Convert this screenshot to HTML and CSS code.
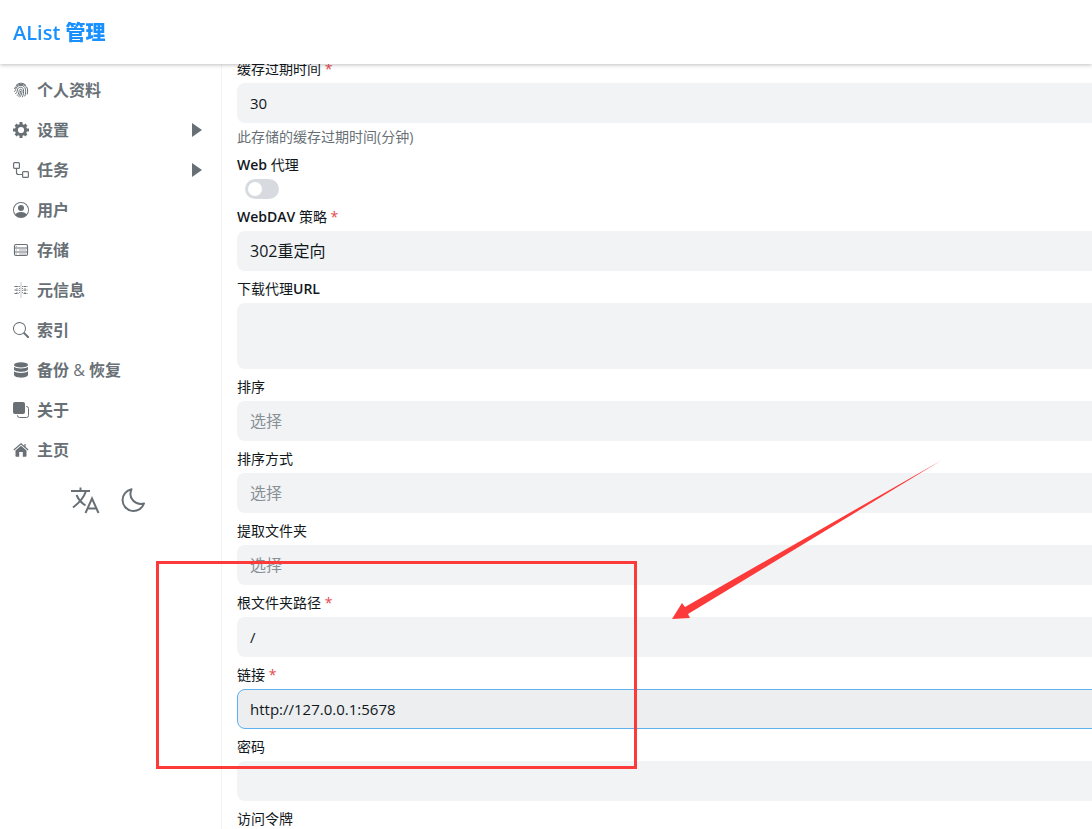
FILE: index.html
```html
<!DOCTYPE html>
<html lang="zh-CN">
<head>
    <meta charset="UTF-8">
    <meta name="viewport" content="width=device-width, initial-scale=1.0">
    <title>AList 管理</title>
    <link rel="stylesheet" href="styles.css">
</head>
<body>
    <header class="header">
        <a class="brand" href="#">AList <b>管理</b></a>
    </header>
    <div class="layout">
        <aside class="sidebar">
            <nav class="menu">
                <a class="menu-item" href="#">
                    <svg class="icon line" viewBox="0 0 16 16"><path d="M3 3.5a6.500 6.500 0 0 1 10 0M1.500 7C3 .8 13 .8 14.500 7c.3 2 .1 4-.4 5.500M1.300 9.800C3 8.500 2.400 6.500 4 5c2-2.200 6-2.200 7.800.4 1.300 2.300 1 6.300-.1 9M2.300 12c2.300-1.500 1.700-4 2.600-5.400 1.300-2 4.600-1.800 5.400.5.7 2.500.1 5.900-1 8.200M4 13.700C6 12 5.800 10 6.300 8.300c.5-1.500 2.500-1.400 2.700.2.200 2.500-.8 4.900-2.300 6.700M7.600 8.800c.1 2-.7 4-2.200 5.700"/></svg>
                    <span>个人资料</span>
                </a>
                <a class="menu-item" href="#">
                    <svg class="icon line" viewBox="0 0 16 16"><circle cx="8" cy="8" r="4.600" stroke-width="3"/><path d="M8 0v3M8 13v3M0 8h3M13 8h3M2.600 2.600l2 2M11.400 11.400l2 2M2.600 13.400l2-2M11.400 4.600l2-2" stroke-width="3"/></svg>
                    <span>设置</span>
                    <svg class="caret" viewBox="0 0 10 14"><path d="M0 0l10 7-10 7z"/></svg>
                </a>
                <a class="menu-item" href="#">
                    <svg class="icon line" viewBox="0 0 16 16"><g stroke-width="1.200"><rect x=".6" y=".6" width="5.800" height="5.800" rx="1"/><rect x="9.600" y="9.600" width="5.800" height="5.800" rx="1"/><path d="M3.500 6.400v4.100a2 2 0 0 0 2 2h4.100"/></g></svg>
                    <span>任务</span>
                    <svg class="caret" viewBox="0 0 10 14"><path d="M0 0l10 7-10 7z"/></svg>
                </a>
                <a class="menu-item" href="#">
                    <svg class="icon" viewBox="0 0 16 16"><path d="M11 6a3 3 0 1 1-6 0 3 3 0 0 1 6 0"/><path fill-rule="evenodd" d="M0 8a8 8 0 1 1 16 0A8 8 0 0 1 0 8m8-7a7 7 0 0 0-5.468 11.370C3.242 11.226 4.805 10 8 10s4.757 1.225 5.468 2.370A7 7 0 0 0 8 1"/></svg>
                    <span>用户</span>
                </a>
                <a class="menu-item" href="#">
                    <svg class="icon line" viewBox="0 0 16 16"><rect x="1.500" y="2.500" width="13" height="11" rx="1.500" stroke-width="1.200"/><path d="M1.500 6h13M1.500 10h13"/><path d="M3 8h1M6 8h7M3 4.500h1M3 12h1M6 12h7" stroke-width=".6"/></svg>
                    <span>存储</span>
                </a>
                <a class="menu-item" href="#">
                    <svg class="icon line" viewBox="0 0 16 16"><path d="M8 .5v15" stroke-width=".8" stroke-dasharray="1 1"/><path d="M1.500 4.500h4M10.500 4.500h4M1.500 8h4M10.500 8h4M1.500 11.500h4M10.500 11.500h4" stroke-dasharray="2.500 .5 1 3"/><path d="M6.500 4v8M9.500 4v8M4 4v8M12 4v8" stroke-width=".8" stroke-dasharray="1 1"/></svg>
                    <span>元信息</span>
                </a>
                <a class="menu-item" href="#">
                    <svg class="icon" viewBox="0 0 16 16"><path d="M11.742 10.344a6.500 6.500 0 1 0-1.397 1.398h-.001c.03.04.062.078.098.115l3.850 3.850a1 1 0 0 0 1.415-1.414l-3.850-3.850a1 1 0 0 0-.115-.1zM12 6.500a5.500 5.500 0 1 1-11 0 5.500 5.500 0 0 1 11 0"/></svg>
                    <span>索引</span>
                </a>
                <a class="menu-item" href="#">
                    <svg class="icon" viewBox="0 0 16 16"><ellipse cx="8" cy="2.900" rx="7" ry="2.700"/><path d="M1 4.800c2 2.300 12 2.300 14 0v2.700c-1 3-13 3-14 0zM1 9.300c2 2.300 12 2.300 14 0v3.700c-1 3.500-13 3.500-14 0z"/></svg>
                    <span>备份 <i>&amp;</i> 恢复</span>
                </a>
                <a class="menu-item" href="#">
                    <svg class="icon" viewBox="0 0 16 16"><rect width="12" height="12" rx="2"/><path d="M13 4.500h.5a2 2 0 0 1 2 2v7a2 2 0 0 1-2 2h-7a2 2 0 0 1-2-2V13" fill="none" stroke="currentColor"/></svg>
                    <span>关于</span>
                </a>
                <a class="menu-item" href="#">
                    <svg class="icon" viewBox="0 0 16 16"><path d="M8 3.800l5.500 4.700V14a.7.7 0 0 1-.7.7H9.800V10H6.200v4.700h-3a.7.7 0 0 1-.7-.7V8.500z"/><path d="M.8 8L8 1.800 15.200 8M12 2v2.800" fill="none" stroke="currentColor" stroke-width="1.200"/></svg>
                    <span>主页</span>
                </a>
            </nav>
            <div class="tools">
                <button class="tool" type="button" aria-label="语言">
                    <svg class="line" viewBox="0 0 32 32"><path d="M2 7h19M11.500 3.500V7M17 7C15 13.500 10 19 4 23.500M7.500 11c2 4.500 5 8 9 10.500M16.500 29L23 14.500 29.500 29M18.500 24.500h9" stroke-width="2"/></svg>
                </button>
                <button class="tool" type="button" aria-label="深色模式">
                    <svg class="line" viewBox="0 0 32 32"><path d="M14.500 5.200A11 11 0 1 0 27 19.500C19 21.500 10.500 15 14.500 5.200z" stroke-width="2" stroke-linejoin="round"/></svg>
                </button>
            </div>
        </aside>
        <main class="content">
            <form class="form">
                <div class="field">
                    <label for="cache">缓存过期时间 <em>*</em></label>
                    <input class="control" id="cache" type="text" value="30">
                    <p class="help">此存储的缓存过期时间(分钟)</p>
                </div>
                <div class="field">
                    <label for="web-proxy"><b>Web</b> 代理</label>
                    <input class="switch" id="web-proxy" type="checkbox" role="switch">
                </div>
                <div class="field">
                    <label for="webdav"><b>WebDAV</b> 策略 <em>*</em></label>
                    <select class="control" id="webdav"><option>302重定向</option></select>
                </div>
                <div class="field">
                    <label for="proxy-url">下载代理<b>URL</b></label>
                    <textarea class="control area" id="proxy-url"></textarea>
                </div>
                <div class="field">
                    <label for="order">排序</label>
                    <select class="control empty" id="order"><option>选择</option></select>
                </div>
                <div class="field">
                    <label for="direction">排序方式</label>
                    <select class="control empty" id="direction"><option>选择</option></select>
                </div>
                <div class="field">
                    <label for="extract">提取文件夹</label>
                    <select class="control empty" id="extract"><option>选择</option></select>
                </div>
                <div class="field">
                    <label for="root">根文件夹路径 <em>*</em></label>
                    <input class="control" id="root" type="text" value="/">
                </div>
                <div class="field">
                    <label for="url">链接 <em>*</em></label>
                    <input class="control active" id="url" type="text" value="http://127.0.0.1:5678">
                </div>
                <div class="field">
                    <label for="password">密码</label>
                    <input class="control" id="password" type="text">
                </div>
                <div class="field">
                    <label for="token">访问令牌</label>
                    <input class="control" id="token" type="text">
                </div>
            </form>
        </main>
    </div>
    <div class="mark-box"></div>
    <svg class="mark-arrow" viewBox="0 0 272 162"><path d="M0 160L10 144l3 4L270 1 16 155l2 4z"/></svg>
</body>
</html>
```
FILE: styles.css
```css
* {
    box-sizing: border-box;
}

body {
    margin: 0;
    background: #fff;
    color: #11181c;
    font-family: "Open Sans", "Noto Sans", "Noto Sans CJK SC", sans-serif;
    font-size: 16px;
}

.header {
    position: fixed;
    top: 0;
    left: 0;
    right: 0;
    z-index: 2;
    display: flex;
    align-items: center;
    height: 64px;
    padding: 2px 13px 0;
    background: #fff;
    box-shadow: 0 1px 4px rgba(0, 0, 0, 0.25);
}

.brand {
    color: #1890ff;
    font-size: 20px;
    line-height: 28px;
    font-weight: 600;
    text-decoration: none;
}

.layout {
    display: flex;
    height: 100vh;
}

.sidebar {
    flex: none;
    width: 222px;
    padding-top: 70px;
    border-right: 1px solid #f3f3f3;
}

.menu-item {
    display: flex;
    align-items: center;
    gap: 8px;
    height: 40px;
    padding: 0 19px 0 13px;
    color: #687076;
    font-weight: 700;
    line-height: 24px;
    text-decoration: none;
}

.menu-item i {
    font-style: normal;
    font-weight: 400;
}

.icon {
    flex: none;
    width: 16px;
    height: 16px;
    fill: currentColor;
}

.line {
    fill: none;
    stroke: currentColor;
}

.caret {
    width: 10px;
    height: 14px;
    margin-left: auto;
    fill: currentColor;
}

.tools {
    display: flex;
    justify-content: center;
    gap: 16px;
    padding: 14px 4px 0 0;
}

.tool {
    width: 32px;
    height: 32px;
    padding: 0;
    border: 0;
    background: none;
    color: #687076;
}

.tool svg {
    display: block;
}

.content {
    flex: 1;
    min-width: 0;
    padding: 59px 0 0 15px;
    overflow: hidden;
}

/* fields run past the right edge of the window */
.form {
    display: flex;
    flex-direction: column;
    gap: 8px;
    margin-right: -16px;
}

.field {
    display: flex;
    flex-direction: column;
    gap: 4px;
}

.field label {
    font-size: 14px;
    line-height: 20px;
}

.field b {
    font-weight: 600;
}

.field em {
    color: #e5484d;
    font-style: normal;
}

.control {
    width: 100%;
    height: 40px;
    padding: 0 12px;
    border: 1px solid transparent;
    border-radius: 8px;
    outline: 0;
    background: #f1f3f5;
    color: #11181c;
    font-family: inherit;
    font-size: 16px;
    appearance: none;
}

input.control {
    font-size: 15px;
}

.area {
    height: 66px;
    resize: none;
}

.empty {
    color: #889096;
}

.active {
    border-color: #5eb0ef;
    background: #eceef0;
}

.help {
    margin: 0;
    color: #687076;
    font-size: 14px;
    line-height: 20px;
}

.switch {
    width: 34px;
    height: 20px;
    margin: 0 8px;
    padding: 3px;
    border-radius: 10px;
    background: #d7dbdf;
    appearance: none;
}

.switch::before {
    content: "";
    display: block;
    width: 14px;
    height: 14px;
    border-radius: 50%;
    background: #fff;
}

.mark-box {
    position: absolute;
    left: 156px;
    top: 561px;
    z-index: 3;
    width: 481px;
    height: 208px;
    border: 3px solid #fd3a3a;
    pointer-events: none;
}

.mark-arrow {
    position: absolute;
    left: 672px;
    top: 459px;
    z-index: 3;
    width: 272px;
    height: 162px;
    fill: #fd3a3a;
    pointer-events: none;
}
```
